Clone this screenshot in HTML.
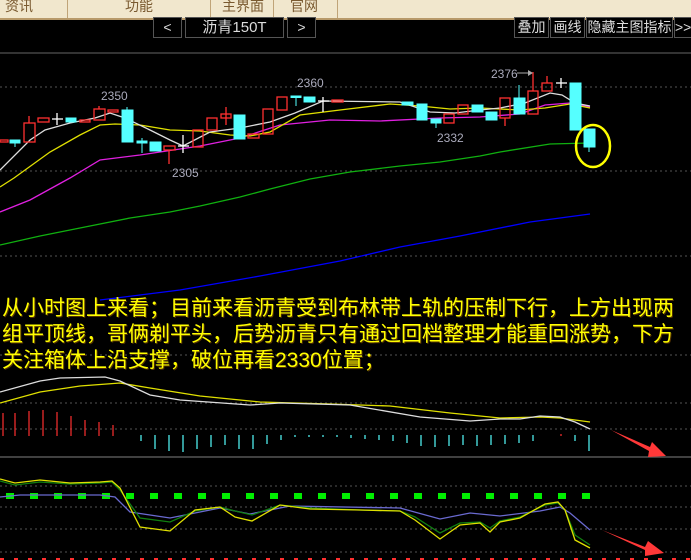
<!DOCTYPE html>
<html><head><meta charset="utf-8"><style>
body{margin:0;width:691px;height:560px;overflow:hidden;background:#000;font-family:"Liberation Sans","Noto Sans CJK SC",sans-serif;position:relative}
.top{position:absolute;left:0;top:0;width:691px;height:18px;background:#f1e7cd;border-bottom:2px solid #b89a6a}
.top span{position:absolute;top:-4px;font-size:14px;color:#7a5a30}
.sep{position:absolute;top:0;width:1px;height:18px;background:#c0a478}
.btn{position:absolute;top:17px;height:19px;border:1px solid #555;color:#ddd;font-size:14px;line-height:19px;text-align:center;background:#000}
.txt{position:absolute;left:2px;top:296px;width:690px;font-size:21px;line-height:26px;color:#ffff00;text-shadow:1px 1px 0 #553300;font-family:"Liberation Sans","Noto Sans CJK SC",sans-serif;white-space:nowrap}
</style></head><body>
<div class="top">
<span style="left:5px">资讯</span><div class="sep" style="left:67px"></div>
<span style="left:125px">功能</span><div class="sep" style="left:210px"></div>
<span style="left:222px">主界面</span><div class="sep" style="left:273px"></div>
<span style="left:290px">官网</span><div class="sep" style="left:337px"></div>
</div>
<div class="btn" style="left:153px;width:27px">&lt;</div>
<div class="btn" style="left:185px;width:97px;font-size:15px">沥青150T</div>
<div class="btn" style="left:287px;width:27px">&gt;</div>
<div class="btn" style="left:514px;width:33px">叠加</div>
<div class="btn" style="left:550px;width:33px">画线</div>
<div class="btn" style="left:586px;width:85px">隐藏主图指标</div>
<div class="btn" style="left:674px;width:20px;text-align:left">&gt;&gt;</div>
<svg width="691" height="560" style="position:absolute;left:0;top:0" xmlns="http://www.w3.org/2000/svg">
<line x1="0" y1="53" x2="691" y2="53" stroke="#444" stroke-width="1.5"/>
<g stroke="#555" stroke-dasharray="2,3" stroke-width="1">
<line x1="0" y1="87" x2="691" y2="87"/><line x1="0" y1="171" x2="691" y2="171"/><line x1="0" y1="256" x2="691" y2="256"/>
<line x1="0" y1="355" x2="691" y2="355"/><line x1="0" y1="403" x2="691" y2="403"/><line x1="0" y1="429" x2="691" y2="429"/>
<line x1="0" y1="486" x2="691" y2="486"/><line x1="0" y1="507" x2="691" y2="507"/><line x1="0" y1="529" x2="691" y2="529"/><line x1="0" y1="552" x2="691" y2="552"/>
</g>
<line x1="0" y1="457" x2="691" y2="457" stroke="#555" stroke-width="1.5"/>
<g fill="none" stroke-width="1.3">
<polyline stroke="#0000ff" points="100,300 180,290 260,276 340,261 400,247 460,236 530,222 590,214"/>
<polyline stroke="#10b010" points="0,245 40,236 90,226 130,218 170,212 200,206 240,197 270,189 310,179 350,172 400,166 440,162 480,156 500,152 550,144 590,143"/>
<polyline stroke="#e020e0" points="0,212 30,200 70,178 100,160 140,155 160,152 200,146 240,138 280,125 330,120 380,121 440,118 480,117 520,114 545,105 570,103 590,107"/>
<polyline stroke="#e0e000" points="0,187 14,178 50,152 80,135 100,125 115,124 140,125 170,130 200,131 230,135 250,136 270,132 300,115 340,110 390,104 420,106 450,109 480,108 520,110 545,108 570,104 590,108"/>
<polyline stroke="#ddd" points="0,170 30,140 45,130 70,123 95,118 110,113 125,118 150,130 170,140 183,146 210,132 240,128 270,122 295,113 323,101 400,102 430,112 455,113 480,110 500,108 525,103 550,93 562,95 575,103 590,106"/>
</g>
<g stroke="#ff3030" stroke-width="1.3" fill="none">
<rect x="0" y="140" width="8" height="2"/>
<line x1="29" y1="116" x2="29" y2="123"/><rect x="24" y="123" width="11" height="19"/>
<rect x="38" y="118" width="11" height="4"/>
<rect x="80" y="120" width="10" height="2"/>
<line x1="99" y1="106" x2="99" y2="109"/><rect x="94" y="109" width="11" height="11"/>
<rect x="108" y="110" width="10" height="2"/>
<line x1="169" y1="150" x2="169" y2="164"/><rect x="164" y="146" width="11" height="4"/>
<rect x="193" y="130" width="10" height="17"/>
<rect x="207" y="118" width="10" height="12"/>
<line x1="226" y1="107" x2="226" y2="125"/><rect x="221" y="114" width="10" height="4"/>
<rect x="248" y="134" width="11" height="4"/>
<rect x="263" y="109" width="10" height="25"/>
<rect x="277" y="97" width="10" height="13"/>
<rect x="332" y="100" width="11" height="2"/>
<rect x="444" y="114" width="10" height="9"/>
<rect x="458" y="105" width="10" height="9"/>
<line x1="505" y1="118" x2="505" y2="126"/><rect x="500" y="98" width="10" height="20"/>
<line x1="533" y1="72" x2="533" y2="91"/><rect x="528" y="91" width="10" height="23"/>
<line x1="547" y1="76" x2="547" y2="83"/><rect x="542" y="83" width="10" height="8"/>
</g>
<g fill="#55ffff" stroke="#55ffff" stroke-width="1">
<rect x="10" y="140" width="10" height="3"/><line x1="15" y1="143" x2="15" y2="147"/>
<rect x="66" y="118" width="10" height="4"/>
<line x1="127" y1="107" x2="127" y2="110"/><rect x="122" y="110" width="11" height="32"/>
<line x1="142" y1="138" x2="142" y2="153"/><rect x="137" y="141" width="10" height="2"/>
<rect x="150" y="142" width="11" height="9"/>
<rect x="234" y="115" width="11" height="24"/>
<line x1="296" y1="96" x2="296" y2="106"/><rect x="291" y="96" width="10" height="1.5"/>
<rect x="304" y="97" width="11" height="5"/>
<rect x="402" y="102" width="11" height="3"/>
<rect x="417" y="104" width="10" height="16"/>
<line x1="436" y1="123" x2="436" y2="128"/><rect x="431" y="119" width="10" height="4"/>
<rect x="472" y="105" width="11" height="7"/>
<rect x="486" y="112" width="11" height="8"/>
<line x1="519" y1="85" x2="519" y2="98"/><rect x="514" y="98" width="11" height="16"/>
<rect x="570" y="83" width="11" height="47"/>
<line x1="589" y1="147" x2="589" y2="152"/><rect x="584" y="129" width="11" height="18"/>
</g>
<g stroke="#fff" stroke-width="1.3">
<line x1="52" y1="119" x2="63" y2="119"/><line x1="57" y1="113" x2="57" y2="125"/>
<line x1="178" y1="146" x2="189" y2="146"/><line x1="183" y1="135" x2="183" y2="153"/>
<line x1="318" y1="101" x2="329" y2="101"/><line x1="323" y1="97" x2="323" y2="112"/>
<line x1="556" y1="83" x2="567" y2="83"/><line x1="561" y1="78" x2="561" y2="88"/>
</g>
<ellipse cx="593" cy="146" rx="17" ry="21" fill="none" stroke="#ffff00" stroke-width="2.5"/>
<g fill="#aab" font-size="12" font-family="Liberation Sans">
<text x="101" y="100">2350</text><text x="297" y="87">2360</text><text x="172" y="177">2305</text><text x="437" y="142">2332</text><text x="491" y="78">2376</text>
</g>
<line x1="517" y1="73" x2="528" y2="73" stroke="#aaa"/><polygon points="528,70 533,73 528,76" fill="#aaa"/>
<g stroke="#ff3030" stroke-width="1.2">
<line x1="3" y1="413" x2="3" y2="436"/><line x1="15" y1="413" x2="15" y2="436"/><line x1="29" y1="411" x2="29" y2="436"/><line x1="43" y1="410" x2="43" y2="436"/><line x1="57" y1="412" x2="57" y2="436"/><line x1="71" y1="416" x2="71" y2="436"/><line x1="85" y1="420" x2="85" y2="436"/><line x1="99" y1="422" x2="99" y2="436"/><line x1="113" y1="425" x2="113" y2="436"/><line x1="561" y1="434" x2="561" y2="436"/>
</g>
<g stroke="#55ffff" stroke-width="1.2">
<line x1="141" y1="435" x2="141" y2="441"/><line x1="155" y1="435" x2="155" y2="449"/><line x1="169" y1="435" x2="169" y2="451"/><line x1="183" y1="435" x2="183" y2="452"/><line x1="197" y1="435" x2="197" y2="449"/><line x1="211" y1="435" x2="211" y2="447"/><line x1="225" y1="435" x2="225" y2="445"/><line x1="239" y1="435" x2="239" y2="449"/><line x1="253" y1="435" x2="253" y2="449"/><line x1="267" y1="435" x2="267" y2="444"/><line x1="281" y1="435" x2="281" y2="440"/><line x1="295" y1="435" x2="295" y2="437"/><line x1="309" y1="435" x2="309" y2="437"/><line x1="323" y1="435" x2="323" y2="437"/><line x1="337" y1="435" x2="337" y2="437"/><line x1="351" y1="435" x2="351" y2="438"/><line x1="365" y1="435" x2="365" y2="439"/><line x1="379" y1="435" x2="379" y2="440"/><line x1="393" y1="435" x2="393" y2="441"/><line x1="407" y1="435" x2="407" y2="443"/><line x1="421" y1="435" x2="421" y2="446"/><line x1="435" y1="435" x2="435" y2="447"/><line x1="449" y1="435" x2="449" y2="446"/><line x1="463" y1="435" x2="463" y2="445"/><line x1="477" y1="435" x2="477" y2="446"/><line x1="491" y1="435" x2="491" y2="445"/><line x1="505" y1="435" x2="505" y2="444"/><line x1="519" y1="435" x2="519" y2="443"/><line x1="533" y1="435" x2="533" y2="441"/><line x1="575" y1="435" x2="575" y2="441"/><line x1="589" y1="435" x2="589" y2="451"/>
</g>
<g fill="none" stroke-width="1.3">
<polyline stroke="#e0e000" points="0,403 40,392 80,386 120,383 150,388 200,396 260,402 330,404 390,406 450,413 500,418 540,417 560,418 590,422"/>
<polyline stroke="#ddd" points="0,392 40,381 60,378 105,377 120,381 150,395 180,400 250,405 280,403 350,405 420,417 470,421 500,419 520,419 540,416 560,417 575,422 590,429"/>
</g>
<g fill="#00ee00">
<rect x="6" y="493" width="8" height="6"/><rect x="30" y="493" width="8" height="6"/><rect x="54" y="493" width="8" height="6"/><rect x="78" y="493" width="8" height="6"/><rect x="102" y="493" width="8" height="6"/><rect x="126" y="493" width="8" height="6"/><rect x="150" y="493" width="8" height="6"/><rect x="174" y="493" width="8" height="6"/><rect x="198" y="493" width="8" height="6"/><rect x="222" y="493" width="8" height="6"/><rect x="246" y="493" width="8" height="6"/><rect x="270" y="493" width="8" height="6"/><rect x="294" y="493" width="8" height="6"/><rect x="318" y="493" width="8" height="6"/><rect x="342" y="493" width="8" height="6"/><rect x="366" y="493" width="8" height="6"/><rect x="390" y="493" width="8" height="6"/><rect x="414" y="493" width="8" height="6"/><rect x="438" y="493" width="8" height="6"/><rect x="462" y="493" width="8" height="6"/><rect x="486" y="493" width="8" height="6"/><rect x="510" y="493" width="8" height="6"/><rect x="534" y="493" width="8" height="6"/><rect x="558" y="493" width="8" height="6"/><rect x="582" y="493" width="8" height="6"/>
</g>
<g fill="none" stroke-width="1.3">
<polyline stroke="#6a6ad0" points="0,497 20,495 100,495 115,497 130,512 170,518 220,508 250,514 290,506 400,508 440,519 470,513 500,516 540,511 560,507 570,513 590,530"/>
<polyline stroke="#108010" points="0,481 15,485 40,482 70,484 100,483 112,482 120,490 140,518 170,522 195,511 220,507 235,511 252,515 280,505 310,508 360,510 400,511 415,517 440,533 460,523 480,522 490,528 500,521 520,517 545,505 558,503 565,510 575,535 590,545"/>
<polyline stroke="#e0e000" points="0,479 15,483 40,480 70,483 100,482 112,481 120,488 140,527 170,531 195,510 220,507 235,517 252,521 280,505 310,509 360,510 400,511 415,520 440,539 460,525 480,523 490,532 500,522 520,518 545,504 558,502 565,510 575,540 590,548"/>
</g>
<line x1="0" y1="559" x2="691" y2="559" stroke="#ff3030" stroke-width="2" stroke-dasharray="4,10"/>
<polygon fill="#ff3838" points="611,430 650,447 652,442 666,456 648,457 649,451"/>
<polygon fill="#ff3838" points="602,530 645,547 648,541 664,553 645,556 645,550"/>
</svg>
<div class="txt">从小时图上来看；目前来看沥青受到布林带上轨的压制下行，上方出现两<br>组平顶线，哥俩剃平头，后势沥青只有通过回档整理才能重回涨势，下方<br>关注箱体上沿支撑，破位再看2330位置；</div>
</body></html>
